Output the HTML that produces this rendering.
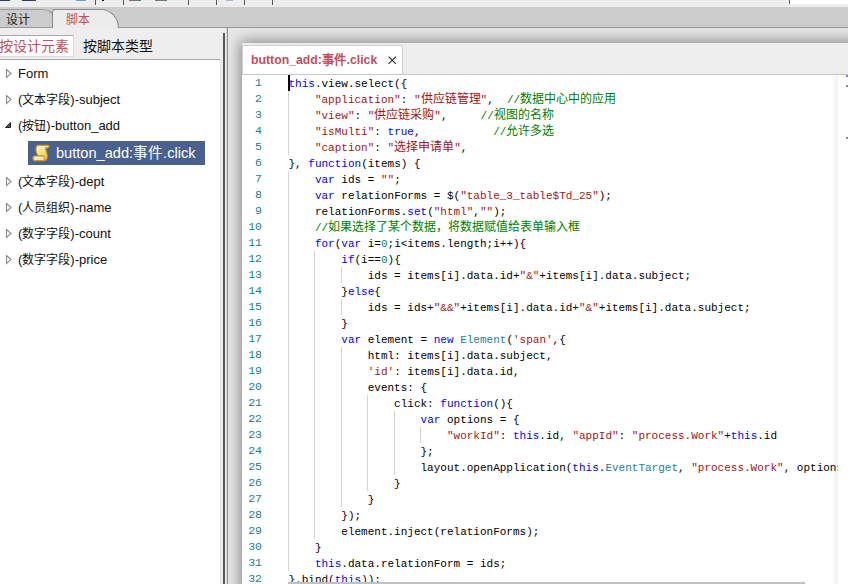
<!DOCTYPE html>
<html lang="zh-CN"><head><meta charset="utf-8">
<style>
*{margin:0;padding:0;box-sizing:border-box}
html,body{width:848px;height:584px;overflow:hidden;background:#eeeeee;font-family:"Liberation Sans",sans-serif;position:relative}
.a{position:absolute}
/* toolbar */
#tb{left:0;top:0;width:848px;height:7px;background:#eeeeee}
.sep{position:absolute;top:0;width:1px;height:5px;background:#555}
.ic{position:absolute;top:0;height:1px}
/* tab bar */
#tabbar{left:0;top:7px;width:848px;height:21px;background:#cccccc;border-bottom:1px solid #999}
#t1{left:-6px;top:9px;width:59px;height:18px;background:#cccccc;border:1px solid #9a9a9a;border-bottom:none;border-radius:0 12px 0 0/0 6px 0 0;font-size:12px;color:#222;padding-left:11px;padding-top:1px;line-height:18px}
#t2{left:52px;top:9px;width:67px;height:19px;background:#ececec;border:1px solid #8c8c8c;border-bottom:none;border-radius:3px 18px 0 0/3px 19px 0 0;font-size:12px;color:#c44d60;padding-left:13px;padding-top:1px;line-height:18px}
/* left panel */
#btn1{left:-9px;top:35px;width:83px;height:22px;background:#fff;border:1px solid #dadada;border-top-color:#a9a9a9;font-size:14px;color:#c4505a;line-height:21px;padding-left:7px}
#btn2{left:83px;top:35px;font-size:14px;color:#111;line-height:22px}
#tree{left:0;top:59px;width:221px;height:530px;background:#fff;border-top:1px solid #a8a8a8;border-right:1px solid #e2e2e2}
.ti{position:absolute;left:18px;font-size:13px;color:#111;line-height:16px;white-space:nowrap}
.tri{position:absolute;left:5px}
.ti .cj{font-size:12px;-webkit-text-stroke:0}
#sel{left:28px;top:141px;width:177px;height:24px;background:#4a6190}
#seltxt{left:56px;top:143px;font-size:14.6px;color:#fff;line-height:20px;white-space:nowrap}
#split1{left:223px;top:33px;width:2px;height:560px;background:#575757}
#split2{left:226px;top:28px;width:2px;height:560px;background:linear-gradient(to right,#d8d8d8 50%,#959595 50%)}
/* right area */
#right{left:228px;top:28px;width:620px;height:560px;background:#e8e8e8;overflow:hidden}
#ed{left:14px;top:15px;width:640px;height:560px;background:#fff;box-shadow:0 0 14px 2px rgba(0,0,0,0.42)}
#strip{left:0;top:0;width:640px;height:31px;background:#ededed}
#etab{left:0;top:2px;width:161px;height:29px;background:#fff;border:1px solid #cfcfcf;border-bottom:none}
#stripline{left:0;top:31px;width:640px;height:1px;background:#c8c8c8}
#etabtxt{left:8px;top:6px;font-size:13px;font-weight:bold;color:#c24e5e;white-space:nowrap;line-height:15px;transform:scaleX(0.945);transform-origin:0 0}
#code{left:0;top:32px;width:596px;height:540px;background:#fff;overflow:hidden}
#mmshadow{left:590px;top:32px;width:6px;height:540px;background:linear-gradient(to right,rgba(0,0,0,0),rgba(0,0,0,0.06))}
#cursor{left:46px;top:0;width:2px;height:16px;background:#000}
#hscroll{left:46px;top:507px;width:517px;height:10px;background:#c1c1c1}
.ln{position:absolute;left:0;margin-top:0px;width:20px;text-align:right;font-family:"Liberation Mono",monospace;font-size:11.5px;color:#237893;line-height:16px}
.cl{position:absolute;left:46.5px;margin-top:1px;font-family:"Liberation Mono",monospace;font-size:11px;color:#000;line-height:16px;white-space:pre}
.cj{font-size:12px;-webkit-text-stroke:0}
.k{color:#0000ff}.s{color:#a31515}.c{color:#008000}.t{color:#267f99}.n{color:#098658}
.g{position:absolute;width:1px;background:#d3d3d3}
</style></head><body>
<div id="tb" class="a">
  <div class="ic" style="left:0;width:10px;background:#2d3f5e"></div>
  <div class="ic" style="left:22px;width:14px;background:#2d3f5e"></div>
  <div class="ic" style="left:76px;width:10px;background:#6a9ad6"></div>
  <div class="sep" style="left:95px"></div>
  <div class="ic" style="left:102px;width:2px;background:#111"></div>
  <div class="sep" style="left:123px"></div>
  <div class="ic" style="left:129px;width:12px;background:#777"></div>
  <div class="ic" style="left:139px;width:2px;background:#2a9a2a"></div>
  <div class="ic" style="left:155px;width:12px;background:#777"></div>
  <div class="ic" style="left:165px;width:2px;background:#2a9a2a"></div>
  <div class="sep" style="left:188px"></div>
  <div class="sep" style="left:216px"></div>
  <div class="ic" style="left:226px;width:7px;background:#a8b8cc"></div>
  <div class="sep" style="left:244px"></div>
  <div class="sep" style="left:272px"></div>
  <div class="a" style="left:789px;top:0;width:59px;height:4px;background:#fff;border-left:1px solid #666"></div>
</div>
<div id="tabbar" class="a"></div>
<div id="t1" class="a">设计</div>
<div id="t2" class="a">脚本</div>

<div id="btn1" class="a">按设计元素</div>
<div id="btn2" class="a">按脚本类型</div>
<div id="tree" class="a">
</div>
<div class="a" style="left:0;top:60px;width:221px;height:524px">
  <svg class="tri" style="top:9px" width="8" height="10"><path d="M1.5 0.5 L6 4.5 L1.5 8.5 Z" fill="none" stroke="#8c8c8c" stroke-width="1.1"/></svg>
  <div class="ti" style="top:6px">Form</div>
  <svg class="tri" style="top:35px" width="8" height="10"><path d="M1.5 0.5 L6 4.5 L1.5 8.5 Z" fill="none" stroke="#8c8c8c" stroke-width="1.1"/></svg>
  <div class="ti" style="top:32px">(<span class="cj">文本字段</span>)-subject</div>
  <svg class="tri" style="top:61px;left:4px" width="9" height="9"><path d="M6.5 1.5 L6.5 6.5 L1.5 6.5 Z" fill="#555" stroke="#222" stroke-width="1" stroke-linejoin="round"/></svg>
  <div class="ti" style="top:58px">(<span class="cj">按钮</span>)-button_add</div>
  <svg class="tri" style="top:117px" width="8" height="10"><path d="M1.5 0.5 L6 4.5 L1.5 8.5 Z" fill="none" stroke="#8c8c8c" stroke-width="1.1"/></svg>
  <div class="ti" style="top:114px">(<span class="cj">文本字段</span>)-dept</div>
  <svg class="tri" style="top:143px" width="8" height="10"><path d="M1.5 0.5 L6 4.5 L1.5 8.5 Z" fill="none" stroke="#8c8c8c" stroke-width="1.1"/></svg>
  <div class="ti" style="top:140px">(<span class="cj">人员组织</span>)-name</div>
  <svg class="tri" style="top:169px" width="8" height="10"><path d="M1.5 0.5 L6 4.5 L1.5 8.5 Z" fill="none" stroke="#8c8c8c" stroke-width="1.1"/></svg>
  <div class="ti" style="top:166px">(<span class="cj">数字字段</span>)-count</div>
  <svg class="tri" style="top:195px" width="8" height="10"><path d="M1.5 0.5 L6 4.5 L1.5 8.5 Z" fill="none" stroke="#8c8c8c" stroke-width="1.1"/></svg>
  <div class="ti" style="top:192px">(<span class="cj">数字字段</span>)-price</div>
</div>
<div id="sel" class="a"></div>
<svg class="a" style="left:30px;top:142px" width="22" height="22" viewBox="0 0 22 22">
  <defs><linearGradient id="sg" x1="0" y1="0" x2="0.6" y2="1"><stop offset="0" stop-color="#fbf1c0"/><stop offset="1" stop-color="#f2cf50"/></linearGradient></defs>
  <path d="M8 3.3 L18 3.3 C19.3 3.3 19.3 5.8 17.8 5.8 L15.8 5.8 C15.5 9 17.5 11.5 17.2 15 C17 17 16 18.4 14.5 18.4 L13 18.4 L13 13.5 L8 13.5 C6.5 11 5.5 8 6.2 5.5 C6.5 4 7.2 3.3 8 3.3 Z" fill="url(#sg)" stroke="#d6960e" stroke-width="1.2" stroke-linejoin="round"/>
  <path d="M4 14 L13.5 14 C14.7 14 14.7 18.6 13.5 18.6 L4 18.6 C2.8 18.6 2.8 14 4 14 Z" fill="#f5e4a8" stroke="#d6960e" stroke-width="1.2"/>
  <path d="M5 15.8 L12.5 15.8" stroke="#fffbe8" stroke-width="1"/>
  <path d="M8 5 L14.5 5 M7.6 6 C7.2 8.5 7.8 10.5 9 12.5" stroke="#fffdf0" stroke-width="1" fill="none"/>
</svg>
<div id="seltxt" class="a">button_add:事件.click</div>
<div id="split1" class="a"></div>
<div id="split2" class="a"></div>

<div id="right" class="a">
 <div id="ed" class="a">
  <div id="strip" class="a"></div>
  <div id="etab" class="a">
    <div id="etabtxt" class="a">button_add:事件.click</div>
    <svg class="a" style="left:145px;top:10px" width="9" height="9"><path d="M0.6 0.6 L7.9 7.9 M7.9 0.6 L0.6 7.9" stroke="#333" stroke-width="1.25"/></svg>
  </div>
  <div id="stripline" class="a"></div>
  <div id="code" class="a">
<div class="ln" style="top:0px">1</div>
<div class="cl" style="top:0px"><span class="k">this</span>.view.select({</div>
<div class="ln" style="top:16px">2</div>
<div class="cl" style="top:16px">    <span class="s">"application"</span>: <span class="s">"<span class="cj">供应链管理</span>"</span>,  <span class="c">//<span class="cj">数据中心中的应用</span></span></div>
<div class="ln" style="top:32px">3</div>
<div class="cl" style="top:32px">    <span class="s">"view"</span>: <span class="s">"<span class="cj">供应链采购</span>"</span>,     <span class="c">//<span class="cj">视图的名称</span></span></div>
<div class="ln" style="top:48px">4</div>
<div class="cl" style="top:48px">    <span class="s">"isMulti"</span>: <span class="k">true</span>,           <span class="c">//<span class="cj">允许多选</span></span></div>
<div class="ln" style="top:64px">5</div>
<div class="cl" style="top:64px">    <span class="s">"caption"</span>: <span class="s">"<span class="cj">选择申请单</span>"</span>,</div>
<div class="ln" style="top:80px">6</div>
<div class="cl" style="top:80px">}, <span class="k">function</span>(items) {</div>
<div class="ln" style="top:96px">7</div>
<div class="cl" style="top:96px">    <span class="k">var</span> ids = <span class="s">""</span>;</div>
<div class="ln" style="top:112px">8</div>
<div class="cl" style="top:112px">    <span class="k">var</span> relationForms = $(<span class="s">"table_3_table$Td_25"</span>);</div>
<div class="ln" style="top:128px">9</div>
<div class="cl" style="top:128px">    relationForms.<span class="k">set</span>(<span class="s">"html"</span>,<span class="s">""</span>);</div>
<div class="ln" style="top:144px">10</div>
<div class="cl" style="top:144px">    <span class="c">//<span class="cj">如果选择了某个数据，将数据赋值给表单输入框</span></span></div>
<div class="ln" style="top:160px">11</div>
<div class="cl" style="top:160px">    <span class="k">for</span>(<span class="k">var</span> i=<span class="n">0</span>;i&lt;items.length;i++){</div>
<div class="ln" style="top:176px">12</div>
<div class="cl" style="top:176px">        <span class="k">if</span>(i==<span class="n">0</span>){</div>
<div class="ln" style="top:192px">13</div>
<div class="cl" style="top:192px">            ids = items[i].data.id+<span class="s">"&amp;"</span>+items[i].data.subject;</div>
<div class="ln" style="top:208px">14</div>
<div class="cl" style="top:208px">        }<span class="k">else</span>{</div>
<div class="ln" style="top:224px">15</div>
<div class="cl" style="top:224px">            ids = ids+<span class="s">"&amp;&amp;"</span>+items[i].data.id+<span class="s">"&amp;"</span>+items[i].data.subject;</div>
<div class="ln" style="top:240px">16</div>
<div class="cl" style="top:240px">        }</div>
<div class="ln" style="top:256px">17</div>
<div class="cl" style="top:256px">        <span class="k">var</span> element = <span class="k">new</span> <span class="t">Element</span>(<span class="s">'span'</span>,{</div>
<div class="ln" style="top:272px">18</div>
<div class="cl" style="top:272px">            html: items[i].data.subject,</div>
<div class="ln" style="top:288px">19</div>
<div class="cl" style="top:288px">            <span class="s">'id'</span>: items[i].data.id,</div>
<div class="ln" style="top:304px">20</div>
<div class="cl" style="top:304px">            events: {</div>
<div class="ln" style="top:320px">21</div>
<div class="cl" style="top:320px">                click: <span class="k">function</span>(){</div>
<div class="ln" style="top:336px">22</div>
<div class="cl" style="top:336px">                    <span class="k">var</span> options = {</div>
<div class="ln" style="top:352px">23</div>
<div class="cl" style="top:352px">                        <span class="s">"workId"</span>: <span class="k">this</span>.id, <span class="s">"appId"</span>: <span class="s">"process.Work"</span>+<span class="k">this</span>.id</div>
<div class="ln" style="top:368px">24</div>
<div class="cl" style="top:368px">                    };</div>
<div class="ln" style="top:384px">25</div>
<div class="cl" style="top:384px">                    layout.openApplication(<span class="k">this</span>.<span class="t">EventTarget</span>, <span class="s">"process.Work"</span>, options);</div>
<div class="ln" style="top:400px">26</div>
<div class="cl" style="top:400px">                }</div>
<div class="ln" style="top:416px">27</div>
<div class="cl" style="top:416px">            }</div>
<div class="ln" style="top:432px">28</div>
<div class="cl" style="top:432px">        });</div>
<div class="ln" style="top:448px">29</div>
<div class="cl" style="top:448px">        element.inject(relationForms);</div>
<div class="ln" style="top:464px">30</div>
<div class="cl" style="top:464px">    }</div>
<div class="ln" style="top:480px">31</div>
<div class="cl" style="top:480px">    <span class="k">this</span>.data.relationForm = ids;</div>
<div class="ln" style="top:496px">32</div>
<div class="cl" style="top:496px">}.bind(<span class="k">this</span>));</div>
<div class="g" style="left:46.0px;top:16px;height:64px"></div>
<div class="g" style="left:46.0px;top:96px;height:400px"></div>
<div class="g" style="left:72.4px;top:176px;height:288px"></div>
<div class="g" style="left:98.8px;top:192px;height:16px"></div>
<div class="g" style="left:98.8px;top:224px;height:16px"></div>
<div class="g" style="left:98.8px;top:272px;height:160px"></div>
<div class="g" style="left:125.2px;top:320px;height:96px"></div>
<div class="g" style="left:151.6px;top:336px;height:64px"></div>
<div class="g" style="left:178.0px;top:352px;height:16px"></div>
<div id="cursor" class="a"></div>
<div id="hscroll" class="a"></div>
  </div>
  <div id="mmshadow" class="a"></div>
  <div class="a" style="left:604px;top:32px;width:3px;height:2px;background:#7d7df5"></div>
  <div class="a" style="left:604px;top:42px;width:2px;height:2px;background:#8a8a8a"></div>
  <div class="a" style="left:604px;top:94px;width:2px;height:2px;background:#8a8a8a"></div>
 </div>
</div>
</body></html>
